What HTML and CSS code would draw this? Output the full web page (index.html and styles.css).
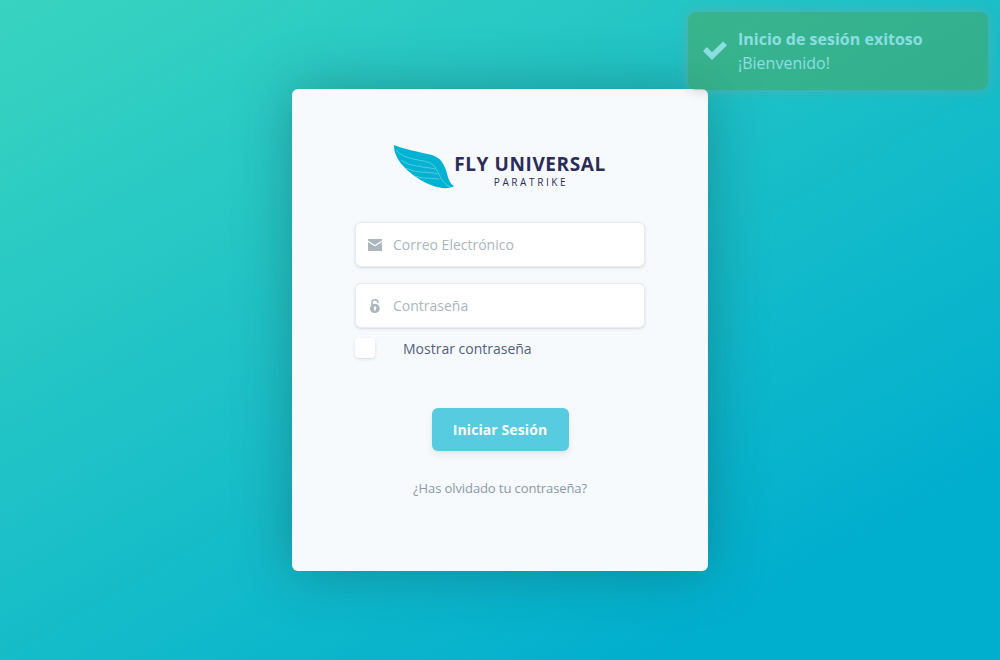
FILE: index.html
```
<!DOCTYPE html>
<html lang="es">
<head>
<meta charset="utf-8">
<title>Fly Universal Paratrike</title>
<link rel="stylesheet" href="styles.css">
</head>
<body>
<main class="card">
  <div class="brand">
    <svg class="wing" width="62" height="46" viewBox="0 0 62 46">
      <path class="wing-body" d="M1 1C13 6 27 8 39 11C48 14 50 19 53 26C55 33 56 39 61 42C57 45 47 45 38 41C24 36 7 22 3 11C1 7 1 4 1 1Z"/>
      <path class="feather" d="M3 6C12 17 31 15 39 20C46 25 46 38 57 43M8 16C17 23 29 22 42 25M13 24C24 30 35 27 45 30M22 32C31 35 38 34 46 35"/>
    </svg>
    <div class="brand-text">
      <span class="brand-name">FLY UNIVERSAL</span>
      <span class="brand-sub">PARATRIKE</span>
    </div>
  </div>
  <form class="form">
    <label class="field">
      <svg width="14" height="14" viewBox="0 0 14 14"><path d="M0 1h14v1.600L7 7 0 2.600ZM0 4l7 4.500L14 4v9H0Z"/></svg>
      <input class="input" type="email" placeholder="Correo Electrónico">
    </label>
    <label class="field">
      <svg width="14" height="14" viewBox="0 0 14 14"><path fill-rule="evenodd" d="M3.300 3.400a3.700 3.400 0 0 1 7.400 0V4H9.200a2.200 2.400 0 0 0-4.400-.4V5.200a4.900 4.600 0 1 1-1.500 1ZM7 7.200a1.500 1.500 0 0 0-.9 2.600V11.500h1.800V9.800A1.500 1.500 0 0 0 7 7.200Z"/></svg>
      <input class="input" type="password" placeholder="Contraseña">
    </label>
    <label class="show"><span class="box"></span><span class="show-text">Mostrar contraseña</span></label>
    <button class="submit" type="button">Iniciar Sesión</button>
    <a class="forgot">¿Has olvidado tu contraseña?</a>
  </form>
</main>
<aside class="toast">
  <svg class="check" width="24" height="20" viewBox="0 0 24 20"><path d="M0 10 3.900 6.100 9 11.200 20.100.5 24 4.300 9 19Z"/></svg>
  <div class="toast-text"><strong class="toast-title">Inicio de sesión exitoso</strong><span>¡Bienvenido!</span></div>
</aside>
</body>
</html>
```
FILE: styles.css
```
* { box-sizing: border-box; }
body {
  margin: 0;
  height: 660px;
  overflow: hidden;
  display: flex;
  align-items: center;
  justify-content: center;
  font-family: "Open Sans", sans-serif;
  background: linear-gradient(150deg, #39d4c0 0%, #00aece 85%);
}
.card {
  width: 416px;
  height: 482px;
  padding: 55px 63px 0;
  border-radius: 6px;
  background: #f7fafc;
  box-shadow: 0 0 56px rgba(20, 50, 60, .34);
}
.brand {
  display: flex;
  margin-left: 38px;
  height: 46px;
}
.wing { flex: none; }
.wing-body { fill: #02b2d2; }
.feather { fill: none; stroke: #69d1e3; stroke-width: .8; }
.brand-text {
  display: flex;
  flex-direction: column;
  align-items: center;
  width: 151px;
  padding-top: 7px;
  color: #2b2c58;
}
.brand-name {
  font-size: 19px;
  line-height: 26px;
  font-weight: 700;
  letter-spacing: .6px;
  margin-left: -1px;
  white-space: nowrap;
}
.brand-sub {
  font-size: 10px;
  line-height: 11px;
  font-weight: 500;
  letter-spacing: 2.600px;
  margin-right: -1px;
}
.form {
  display: flex;
  flex-direction: column;
  margin-top: 32px;
}
.field {
  display: flex;
  align-items: center;
  gap: 11px;
  height: 45px;
  padding: 0 12px;
  margin-bottom: 16px;
  border-radius: 6px;
  border: 1px solid #e9ecef;
  background: #fff;
  box-shadow: 0 1px 3px rgba(50, 50, 93, .15), 0 1px 0 rgba(0, 0, 0, .02);
  fill: #adb5bd;
}
.input {
  flex: 1;
  min-width: 0;
  padding: 0;
  border: 0;
  outline: 0;
  background: none;
  font: 14px/21px "Open Sans", sans-serif;
}
.input::placeholder { color: #adb5bd; opacity: 1; }
.show {
  display: flex;
  align-items: center;
  gap: 28px;
  height: 22px;
  margin-top: -7px;
}
.box {
  width: 20px;
  height: 20px;
  border-radius: 4px;
  background: #fff;
  box-shadow: 0 1px 3px rgba(50, 50, 93, .15), 0 1px 0 rgba(0, 0, 0, .02);
}
.show-text { font-size: 14px; color: #525f7f; }
.submit {
  align-self: center;
  width: 137px;
  height: 43px;
  margin: 49px 0 28px;
  padding: 0;
  border: 0;
  border-radius: 6px;
  background: #02b2d2;
  color: #fff;
  opacity: .65;
  font: 700 14px/21px "Open Sans", sans-serif;
  letter-spacing: .1px;
  box-shadow: 0 4px 6px rgba(50, 50, 93, .11), 0 1px 3px rgba(0, 0, 0, .08);
}
.forgot {
  align-self: center;
  font-size: 13px;
  line-height: 19px;
  letter-spacing: -.1px;
  color: #8898aa;
}
.toast {
  position: absolute;
  top: 12px;
  right: 12px;
  display: flex;
  align-items: center;
  gap: 11px;
  width: 300px;
  height: 78px;
  padding: 0 15px;
  border-radius: 8px;
  background: #51a351;
  box-shadow: 0 0 12px #999;
  color: #fff;
  opacity: .48;
}
.check { fill: #fff; }
.toast-text {
  display: flex;
  flex-direction: column;
  font-size: 16px;
  line-height: 24px;
}
.toast-title { font-weight: 700; }
```
